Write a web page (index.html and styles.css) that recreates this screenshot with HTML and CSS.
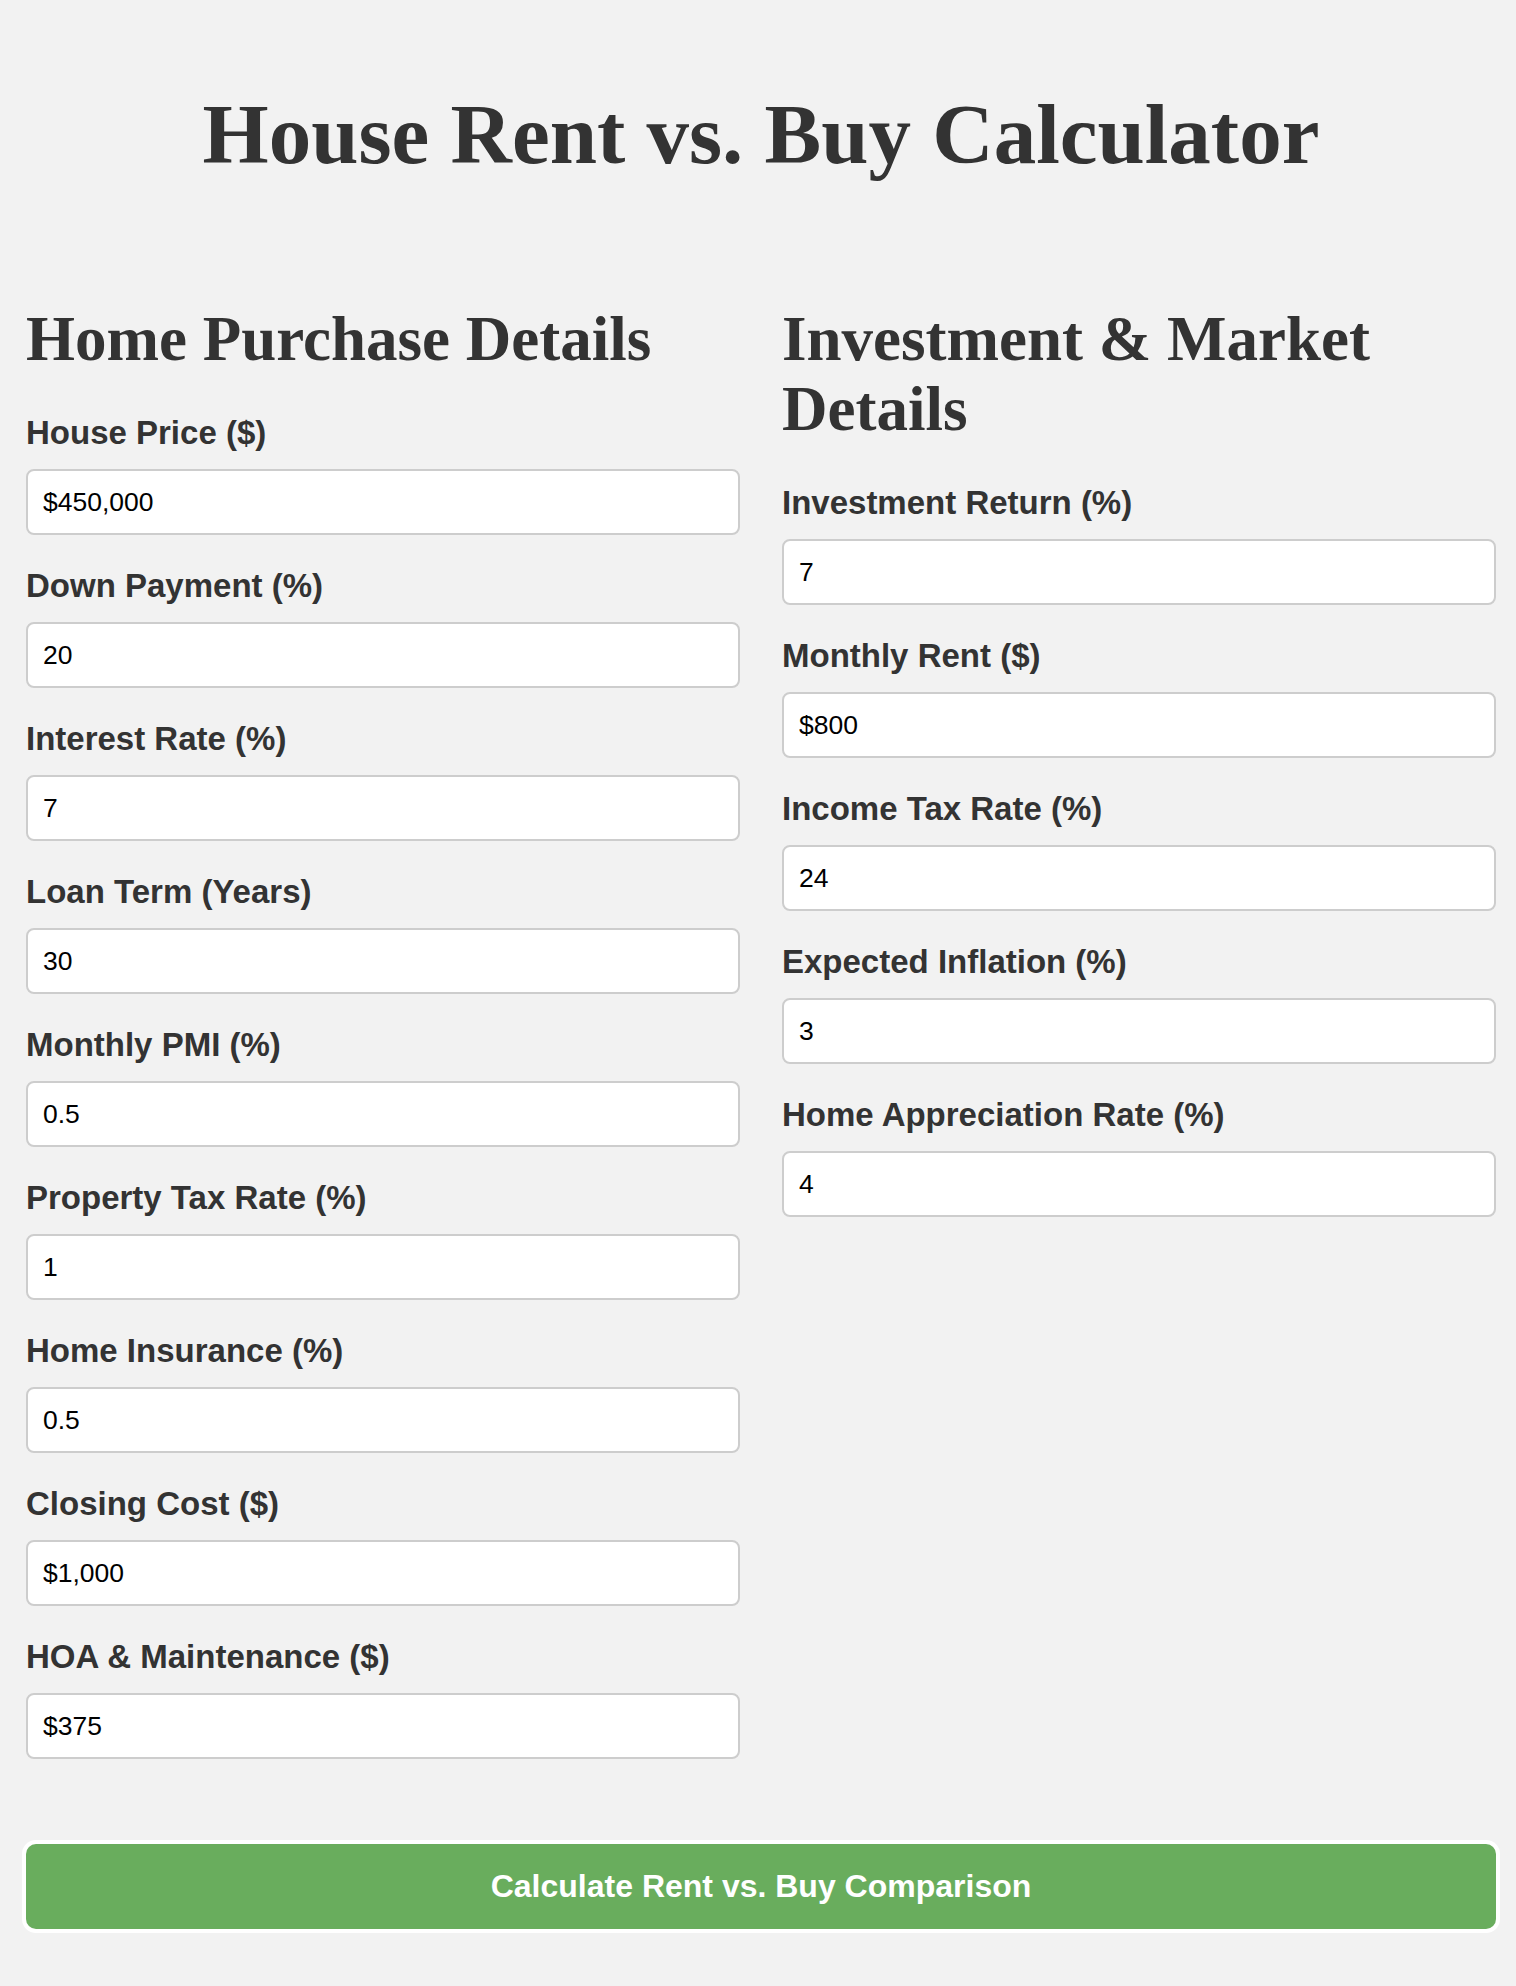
FILE: index.html
```html
<!DOCTYPE html>
<html lang="en">
<head>
    <meta charset="UTF-8" />
    <meta name="viewport" content="width=device-width, initial-scale=1.0"/>
    <title>House Rent vs. Buy Calculator</title>
    <link rel="stylesheet" href="styles.css">
</head>
<body>
    <div class="container">
        <h1>House Rent vs. Buy Calculator</h1>

        <div class="columns">
            <!-- ===== HOME PURCHASE ===== -->
            <div class="column">
                <h2>Home Purchase Details</h2>
                <div class="field">
                    <label for="housePrice">House Price ($)</label>
                    <input type="text" id="housePrice" value="$450,000">
                </div>
                <div class="field">
                    <label for="downPayment">Down Payment (%)</label>
                    <input type="text" id="downPayment" value="20">
                </div>
                <div class="field">
                    <label for="interestRate">Interest Rate (%)</label>
                    <input type="text" id="interestRate" value="7">
                </div>
                <div class="field">
                    <label for="loanTerm">Loan Term (Years)</label>
                    <input type="text" id="loanTerm" value="30">
                </div>
                <div class="field">
                    <label for="pmi">Monthly PMI (%)</label>
                    <input type="text" id="pmi" value="0.5">
                </div>
                <div class="field">
                    <label for="propertyTax">Property Tax Rate (%)</label>
                    <input type="text" id="propertyTax" value="1">
                </div>
                <div class="field">
                    <label for="insurance">Home Insurance (%)</label>
                    <input type="text" id="insurance" value="0.5">
                </div>
                <div class="field">
                    <label for="closingCost">Closing Cost ($)</label>
                    <input type="text" id="closingCost" value="$1,000">
                </div>
                <div class="field">
                    <label for="hoa">HOA &amp; Maintenance ($)</label>
                    <input type="text" id="hoa" value="$375">
                </div>
            </div>

            <!-- ===== INVESTMENT & MARKET ===== -->
            <div class="column">
                <h2>Investment &amp; Market Details</h2>
                <div class="field">
                    <label for="investReturn">Investment Return (%)</label>
                    <input type="text" id="investReturn" value="7">
                </div>
                <div class="field">
                    <label for="rent">Monthly Rent ($)</label>
                    <input type="text" id="rent" value="$800">
                </div>
                <div class="field">
                    <label for="incomeTax">Income Tax Rate (%)</label>
                    <input type="text" id="incomeTax" value="24">
                </div>
                <div class="field">
                    <label for="inflation">Expected Inflation (%)</label>
                    <input type="text" id="inflation" value="3">
                </div>
                <div class="field">
                    <label for="appreciation">Home Appreciation Rate (%)</label>
                    <input type="text" id="appreciation" value="4">
                </div>
            </div>
        </div>

        <button class="calc-button">Calculate Rent vs. Buy Comparison</button>
    </div>
</body>
</html>
```

FILE: styles.css
```css
body{
    margin:0;background:#f2f2f2;color:#333;
    font-family:"Liberation Sans",Arial,Helvetica,sans-serif;
}
.container{padding:0 20px 40px 26px;}

h1,h2{
    font-family:"Liberation Serif","Times New Roman",serif;
    font-weight:bold;color:#333;
}
h1{font-size:85px;line-height:97px;text-align:center;margin:86px 0 121px;}
h2{font-size:63px;line-height:70px;margin:0 0 40px;}

.columns{display:grid;grid-template-columns:1fr 1fr;column-gap:42px;}

.field{margin-bottom:32px;}
.field label{
    display:block;font-size:33px;font-weight:bold;
    line-height:38px;margin-bottom:17px;color:#333;
}
.field input{
    display:block;width:100%;height:66px;box-sizing:border-box;
    padding:16px 15px;border:2px solid #cdcdcd;border-radius:8px;
    background:#fff;color:#000;
    font-family:"Liberation Sans",Arial,sans-serif;font-size:26.5px;
}

/* Tombol hitung */
.calc-button{
    display:block;width:100%;height:85px;margin-top:53px;
    border:none;border-radius:10px;background:#69ad5d;color:#fff;
    font-family:"Liberation Sans",Arial,sans-serif;
    font-size:32px;font-weight:bold;cursor:pointer;
    box-shadow:0 0 0 4px #fff;
}
```
